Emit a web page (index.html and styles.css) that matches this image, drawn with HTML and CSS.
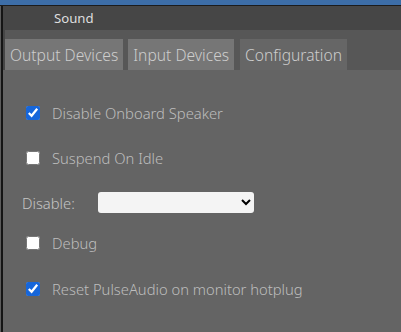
FILE: index.html
```html
<!DOCTYPE html>
<html>
<head>
<meta charset="utf-8">
<link rel="stylesheet" href="styles.css">
</head>
<body>
<div class="topbar"></div>
<div class="frame">
  <div class="header">Sound</div>
  <div class="tabbar">
    <div class="tabstrip">
      <div class="tab">Output Devices</div>
      <div class="tab">Input Devices</div>
      <div class="tab active">Configuration</div>
    </div>
  </div>
  <div class="content">
    <label class="row r1"><input type="checkbox" checked><span>Disable Onboard Speaker</span></label>
    <label class="row r2"><input type="checkbox"><span>Suspend On Idle</span></label>
    <div class="row r3 selrow"><span class="sellabel">Disable:</span><select class="sel"><option></option></select></div>
    <label class="row r4"><input type="checkbox"><span>Debug</span></label>
    <label class="row r5"><input type="checkbox" checked><span>Reset PulseAudio on monitor hotplug</span></label>
  </div>
</div>
</body>
</html>
```
FILE: styles.css
```css
html, body { margin: 0; height: 100%; }
body {
  background: #5c5c5c;
  font-family: "Noto Sans", sans-serif;
  font-weight: 300;
  overflow: hidden;
}
.topbar {
  height: 5px;
  background: #3d6ea8;
  border-bottom: 1px solid #1c1c1c;
}
.frame {
  margin-left: 1px;
  border-left: 2px solid #151515;
  height: 326px;
  display: flex;
  flex-direction: column;
  background: #646464;
}
.header {
  height: 24px;
  line-height: 24px;
  background: #464646;
  color: #dedede;
  font-size: 13.2px;
  font-weight: 400;
  padding-left: 51px;
}
.tabbar {
  background: #464646;
  padding-left: 2px;
}
.tabstrip {
  background: #575757;
  padding-top: 9px;
  display: flex;
  gap: 5px;
}
.tab {
  height: 31px;
  line-height: 32px;
  padding: 0 5px;
  background: #767676;
  color: #cdcdcd;
  font-size: 15.6px;
  white-space: nowrap;
}
.tab.active {
  background: #666666;
  margin-left: 1px;
}
.content {
  flex: 1;
  background: #646464;
  display: flex;
  flex-direction: column;
  padding-top: 33px;
}
.row {
  display: flex;
  align-items: center;
  height: 20px;
  color: #bdbdbd;
  font-size: 14.75px;
  padding-left: 23px;
}
.row input {
  margin: 0 12px 0 0;
  width: 14px;
  height: 14px;
  accent-color: #1666da;
}
.r2 { margin-top: 25px; }
.r3 { margin-top: 24px; height: 21px; padding-left: 19px; }
.r4 { margin-top: 20px; }
.r5 { margin-top: 26px; }
.sellabel {
  width: 76px;
  color: #c4c4c4;
}
.sel {
  width: 156px;
  height: 21px;
  background: #f4f4f4;
  border: none;
  border-radius: 3px;
  font-family: "Noto Sans", sans-serif;
  font-size: 13px;
}
```
